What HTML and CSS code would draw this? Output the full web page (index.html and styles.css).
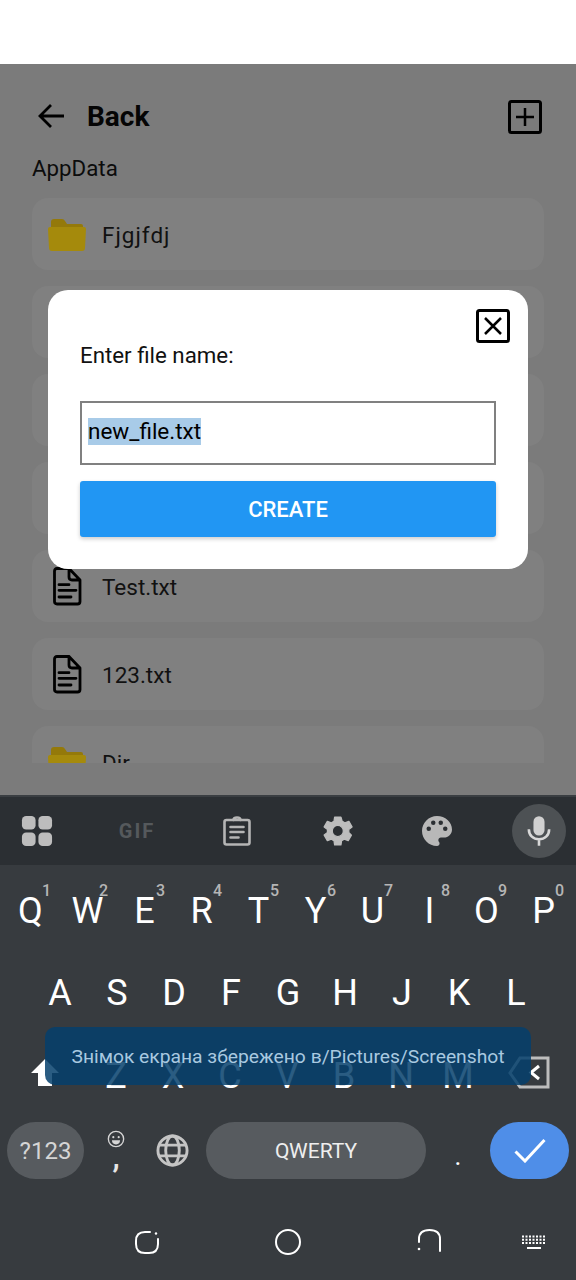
FILE: index.html
```html
<!doctype html>
<html lang="en">
<head>
<meta charset="utf-8">
<title>Files</title>
<meta name="viewport" content="width=device-width,initial-scale=1">
<link rel="stylesheet" href="styles.css">
</head>
<body>
<div class="statusbar"></div>

<main class="app">
  <header class="topbar">
    <svg class="back-icon" width="28" height="26" viewBox="0 0 28 26"><path d="M27 13H3M14 2L3 13l11 11" fill="none" stroke="#000" stroke-width="2.800"/></svg>
    <span class="back-label">Back</span>
    <svg class="add-icon" width="34" height="34" viewBox="0 0 34 34"><rect x="1.500" y="1.500" width="31" height="31" rx="2" fill="none" stroke="#000" stroke-width="3"/><path d="M17 8v18M8 17h18" stroke="#000" stroke-width="2.500"/></svg>
  </header>
  <div class="path">AppData</div>

  <ul class="list">
    <li class="row">
      <svg class="folder" width="40" height="33" viewBox="0 0 40 33"><path d="M4 4q0-3 3-3h8q2 0 3 2l2 3h14q2 0 2 2v3H4z" fill="#94790a"/><path d="M1 11q0-2 2-2h34q2 0 2 2l-1 19q0 3-3 3H5q-3 0-3-3z" fill="#a58a0c"/></svg>
      <span class="wide">Fjgjfdj</span>
    </li>
    <li class="row"></li>
    <li class="row"></li>
    <li class="row"></li>
    <li class="row">
      <svg class="doc" width="30" height="40" viewBox="0 0 30 40" fill="none" stroke="#000" stroke-width="2.800" stroke-linecap="round" stroke-linejoin="round"><path d="M5 2.500H17L28 14V35.500Q28 38 25.500 38H5Q2.500 38 2.500 35.500V5Q2.500 2.500 5 2.500zM17 2.500V11Q17 14 20 14H28"/><path d="M7 18.700H17M7 24.300H24M7 31H19"/></svg>
      <span>Test.txt</span>
    </li>
    <li class="row">
      <svg class="doc" width="30" height="40" viewBox="0 0 30 40" fill="none" stroke="#000" stroke-width="2.800" stroke-linecap="round" stroke-linejoin="round"><path d="M5 2.500H17L28 14V35.500Q28 38 25.500 38H5Q2.500 38 2.500 35.500V5Q2.500 2.500 5 2.500zM17 2.500V11Q17 14 20 14H28"/><path d="M7 18.700H17M7 24.300H24M7 31H19"/></svg>
      <span>123.txt</span>
    </li>
    <li class="row">
      <svg class="folder" width="40" height="33" viewBox="0 0 40 33"><path d="M4 4q0-3 3-3h8q2 0 3 2l2 3h14q2 0 2 2v3H4z" fill="#94790a"/><path d="M1 11q0-2 2-2h34q2 0 2 2l-1 19q0 3-3 3H5q-3 0-3-3z" fill="#a58a0c"/></svg>
      <span>Dir</span>
    </li>
  </ul>

  <section class="dialog">
    <div class="dialog-close">
      <svg width="34" height="34" viewBox="0 0 34 34"><rect x="1.500" y="1.500" width="31" height="31" rx="2" fill="none" stroke="#000" stroke-width="3"/><path d="M9 9l16 16M25 9L9 25" stroke="#000" stroke-width="2.500"/></svg>
    </div>
    <div class="dialog-label">Enter file name:</div>
    <div class="field"><span class="selected">new_file.txt</span></div>
    <button class="create">CREATE</button>
  </section>
</main>

<div class="keyboard">
  <div class="kb-tools">
    <svg width="32" height="32" viewBox="0 0 34 34" fill="#bdbdbd"><rect x="1" y="1" width="14.500" height="14.500" rx="4.500"/><rect x="18.500" y="1" width="14.500" height="14.500" rx="4.500"/><rect x="1" y="18.500" width="14.500" height="14.500" rx="4.500"/><rect x="18.500" y="18.500" width="14.500" height="14.500" rx="4.500"/></svg>
    <span class="gif">GIF</span>
    <svg width="28" height="30" viewBox="0 0 28 30" fill="none" stroke="#b5b5b5" stroke-width="2.600" stroke-linecap="round"><rect x="1.500" y="4" width="25" height="24.500" rx="2"/><path d="M10.500 4q0-2.500 3.500-2.500T17.500 4M7.500 11h13M7.500 16h13M7.500 21.500h8"/></svg>
    <svg width="38" height="38" viewBox="0 0 24 24"><path fill="#bdbdbd" stroke="#bdbdbd" stroke-width=".8" stroke-linejoin="round" d="M19.400 13a7.500 7.500 0 0 0 0-2l2.100-1.600-2-3.500-2.500 1a7.500 7.500 0 0 0-1.700-1L14.500 3.200h-4L10.100 5.900a7.500 7.500 0 0 0-1.700 1l-2.500-1-2 3.500L6 11a7.500 7.500 0 0 0 0 2l-2.100 1.600 2 3.500 2.500-1a7.500 7.500 0 0 0 1.700 1l.4 2.700h4l.4-2.700a7.500 7.500 0 0 0 1.700-1l2.500 1 2-3.500zM12.500 15.500a3.500 3.500 0 1 1 0-7 3.500 3.500 0 0 1 0 7z"/></svg>
    <svg width="36" height="36" viewBox="0 0 24 24"><path fill="#b8b8b8" d="M12 2C6.500 2 2 6.500 2 12s4.500 10 10 10c1 0 1.700-.8 1.700-1.700 0-.4-.2-.8-.4-1.100-.3-.3-.4-.7-.4-1.100 0-.9.800-1.700 1.700-1.700h2c3 0 5.400-2.400 5.400-5.400C22 6 17.500 2 12 2zM6.500 12a1.500 1.500 0 1 1 0-3 1.500 1.500 0 0 1 0 3zm3-4a1.500 1.500 0 1 1 0-3 1.500 1.500 0 0 1 0 3zm5 0a1.500 1.500 0 1 1 0-3 1.500 1.500 0 0 1 0 3zm3 4a1.500 1.500 0 1 1 0-3 1.500 1.500 0 0 1 0 3z"/></svg>
    <div class="mic">
      <svg width="24" height="32" viewBox="0 0 26 34" fill="none"><rect x="7" y="1" width="12" height="21" rx="6" fill="#d0d0d0"/><path d="M2 15c0 7 5 11 11 11s11-4 11-11M13 26v7" stroke="#d8d8d8" stroke-width="2.800"/></svg>
    </div>
  </div>

  <div class="kb-row kb-qwerty">
    <span class="key">Q<sup>1</sup></span>
    <span class="key">W<sup>2</sup></span>
    <span class="key">E<sup>3</sup></span>
    <span class="key">R<sup>4</sup></span>
    <span class="key">T<sup>5</sup></span>
    <span class="key">Y<sup>6</sup></span>
    <span class="key">U<sup>7</sup></span>
    <span class="key">I<sup>8</sup></span>
    <span class="key">O<sup>9</sup></span>
    <span class="key">P<sup>0</sup></span>
  </div>
  <div class="kb-row kb-home">
    <span class="key">A</span><span class="key">S</span><span class="key">D</span><span class="key">F</span><span class="key">G</span><span class="key">H</span><span class="key">J</span><span class="key">K</span><span class="key">L</span>
  </div>
  <div class="kb-row kb-bottom">
    <svg class="shift" width="30" height="29" viewBox="0 0 30 29"><path d="M15 1L1 15h7v13h14V15h7z" fill="#fff"/></svg>
    <span class="key">Z</span><span class="key">X</span><span class="key">C</span><span class="key">V</span><span class="key">B</span><span class="key">N</span><span class="key">M</span>
    <svg class="del" width="42" height="33" viewBox="0 0 42 33" fill="none" stroke="#bdbdbd" stroke-width="3"><path d="M12 2h28v29H12L2 17z"/><path d="M31 10l-8 6.500 8 6.500" stroke="#fff"/></svg>
  </div>

  <div class="kb-actions">
    <span class="pill sym">?123</span>
    <span class="comma"><svg width="18" height="18" viewBox="0 0 20 20" fill="none" stroke="#d5d5d5" stroke-width="1.500"><circle cx="10" cy="10" r="8.500"/><circle cx="7" cy="8" r="1.200" fill="#d5d5d5" stroke="none"/><circle cx="13" cy="8" r="1.200" fill="#d5d5d5" stroke="none"/><path d="M5.500 11.500h9a4.500 4.500 0 0 1-9 0z" fill="#d5d5d5" stroke="none"/></svg><b>,</b></span>
    <svg class="globe" width="33" height="33" viewBox="0 0 34 34" fill="none" stroke="#c4c4c4" stroke-width="3"><circle cx="17" cy="17" r="15"/><ellipse cx="17" cy="17" rx="7" ry="15"/><path d="M4 11.500h26M4 22.500h26"/></svg>
    <span class="pill space">QWERTY</span>
    <span class="period">.</span>
    <span class="pill enter"><svg width="32" height="25" viewBox="0 0 32 25"><path d="M1.500 13.500l9.500 9.500L30.500 2" fill="none" stroke="#fff" stroke-width="3"/></svg></span>
  </div>

  <nav class="navbar">
    <svg width="26" height="24" viewBox="0 0 26 24" fill="none" stroke="#fff" stroke-width="2"><path d="M16 2H11Q2 2 2 11V14Q2 23 11 23H15Q24 23 24 14V9" stroke-linecap="round"/><circle cx="22" cy="3.500" r="1.200" fill="#fff" stroke="none"/></svg>
    <svg width="26" height="26" viewBox="0 0 26 26" fill="none" stroke="#fff" stroke-width="2"><circle cx="13" cy="13" r="12"/></svg>
    <svg width="26" height="24" viewBox="0 0 26 24" fill="none" stroke="#fff" stroke-width="2"><path d="M3 14V11Q3 2 13.500 2T24 11v12" stroke-linecap="round"/><circle cx="3" cy="21" r="1.300" fill="#fff" stroke="none"/></svg>
    <svg width="26" height="14" viewBox="0 0 26 14" fill="none" stroke="#fff" stroke-width="2"><path d="M1 1.500h24M1 4.800h24M1 8h24" stroke-dasharray="2 1.500"/><path d="M6 13h14"/></svg>
  </nav>

  <div class="toast">Знімок екрана збережено в/Pictures/Screenshot</div>
</div>
</body>
</html>
```

FILE: styles.css
```css
* {box-sizing: border-box;}
body {margin: 0; width: 576px; height: 1280px; overflow: hidden; position: relative; background: #fff; font-family: Roboto, "Noto Sans", sans-serif; color: #000;}

.statusbar {height: 64px; background: #fff;}

.app {height: 731px; background: #7b7b7b; padding: 0 32px;}
.topbar {height: 84px; padding-top: 22px; display: flex; align-items: flex-start;}
.back-icon {margin: 17px 0 0 5px;}
.back-label {margin: 14px 0 0 22px; font-size: 28px; line-height: 34px; font-weight: 700; color: #050505;}
.add-icon {margin: 14px 2px 0 auto;}
.path {font-size: 22.300px; line-height: 26px; margin-top: 7px; color: #0c0c0c;}

.list {list-style: none; margin: 17px 0 0; padding: 0; height: 565px; overflow: hidden; display: flex; flex-direction: column; gap: 16px;}
.row {flex: 0 0 72px; background: #808080; border-radius: 16px; display: flex; align-items: center; font-size: 22.500px; color: #111;}
.row span {padding-top: 2px;}
.row .wide {letter-spacing: 1px;}
.row .folder {margin-left: 15px; margin-right: 15px;}
.row .doc {margin-left: 20px; margin-right: 20px;}

.dialog {position: absolute; left: 48px; top: 290px; width: 480px; height: 279px; background: #fff; border-radius: 20px; padding: 19px 32px 0;}
.dialog-close {display: flex; justify-content: flex-end; margin-right: -14px; height: 34px;}
.dialog-label {font-size: 22.300px; line-height: 26px; margin-top: -1px; color: #111;}
.field {height: 64px; margin-top: 33px; border: 2px solid #808080; padding: 15px 6px 0; font-size: 22.500px; line-height: 27px;}
.selected {background: #a8cbe8; display: inline-block;}
.create {display: block; width: 100%; height: 56px; margin-top: 16px; border: 0; border-radius: 3px; background: #2196f3; color: #fff; font: 500 22px Roboto, sans-serif; box-shadow: 0 2px 4px rgba(0,0,0,.2);}

.keyboard {height: 485px; background: #373b3f; border-top: 2px solid #3a3e42;}
.kb-tools {height: 68px; width: 600px; margin-left: -13px; background: #2b2f33; display: grid; grid-template-columns: repeat(6, 100px); align-items: center; justify-items: center;}
.gif {font: 700 20px Roboto, sans-serif; letter-spacing: 2px; color: #55595c;}
.mic {width: 54px; height: 54px; margin-left: 4px; border-radius: 50%; background: #4d5154; display: flex; align-items: center; justify-content: center;}

.kb-row {display: flex; align-items: flex-start; color: #fff; font-size: 36px; line-height: 42px;}
.key {position: relative; width: 57px; text-align: center;}
.key sup {position: absolute; left: 40px; top: -9px; font-size: 16px; line-height: 20px; font-weight: 500; color: #b5b5b5;}
.kb-qwerty {padding: 25px 0 0 2px; height: 82px;}
.kb-home {padding: 25px 0 0 31.500px; height: 83px;}
.kb-bottom {padding: 25px 0 0 30px; height: 92px;}
.shift {margin: 3px 27.500px 0 0; flex: none;}
.del {margin: 1px 0 0 21.500px; flex: none;}

.kb-actions {height: 57px; display: flex; align-items: center; padding-left: 7px; color: #fff;}
.pill {height: 57px; border-radius: 29px; display: flex; align-items: center; justify-content: center; background: #575b5f;}
.sym {width: 77px; font-size: 24px; color: #d5d5d5;}
.comma {width: 20px; margin-left: 22px; display: flex; flex-direction: column; align-items: center;}
.comma svg {margin-bottom: -6px;}
.comma b {font: 500 32px/30px Roboto, sans-serif; color: #e6e6e6;}
.globe {margin-left: 30px;}
.space {width: 220px; margin-left: 17px; font-size: 21px; color: #eee;}
.period {width: 64px; text-align: center; font-size: 26px; line-height: 30px; padding-top: 10px;}
.enter {width: 79px; background: #4f8ee8;}

.navbar {height: 101px; padding: 24px 0 0 134px; display: flex; align-items: center;}
.navbar svg:nth-child(2) {margin-left: 115px;}
.navbar svg:nth-child(3) {margin-left: 115px; margin-top: -4px;}
.navbar svg:nth-child(4) {margin-left: 79px;}

.toast {position: absolute; left: 45px; top: 1027px; width: 486px; height: 58px; border-radius: 10px; background: rgba(5,64,108,.85); color: #a9c9e0; font-size: 19.250px; display: flex; align-items: center; justify-content: center;}
```
